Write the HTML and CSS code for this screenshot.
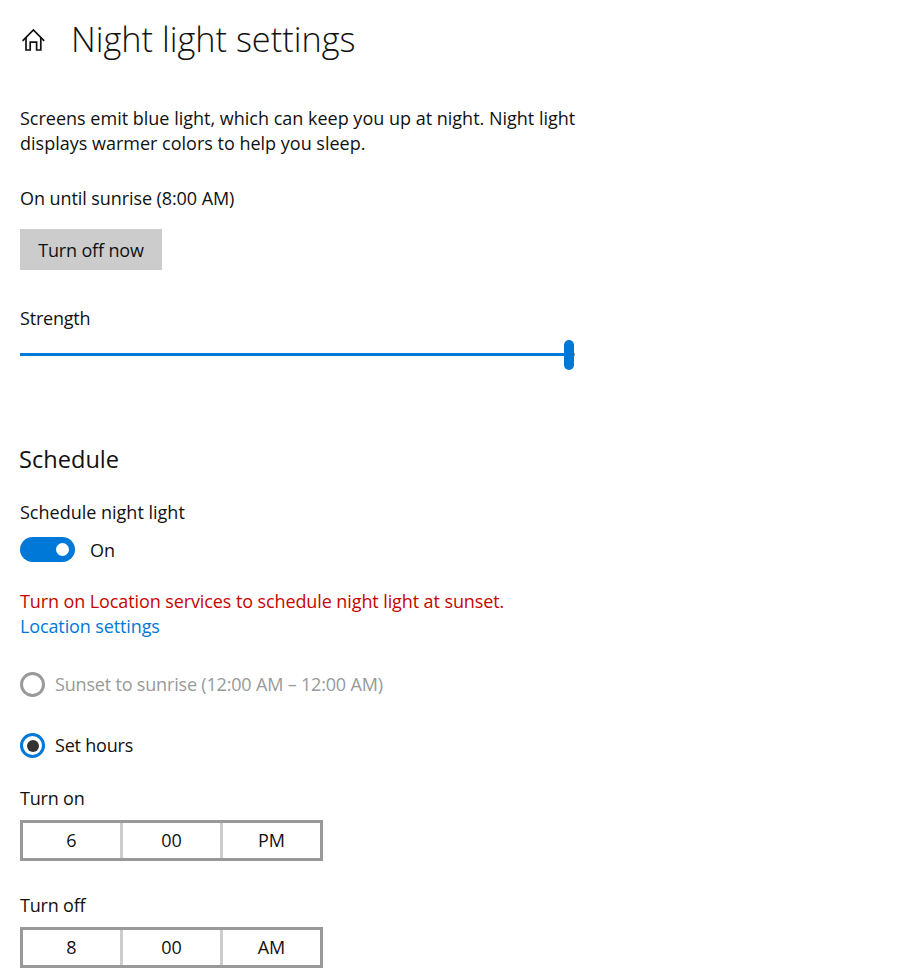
FILE: index.html
```html
<!DOCTYPE html>
<html lang="en">
<head>
  <meta charset="UTF-8">
  <title>Night light settings</title>
  <link rel="stylesheet" href="styles.css">
</head>
<body>
  <!-- Page header -->
  <div class="header">
    <svg class="home-icon" width="26" height="26" viewBox="0 0 26 26" fill="none" stroke="#111" stroke-width="1.7">
      <path d="M1.6 14.8 L12.4 4 L23.2 14.8"/>
      <path d="M5 11 V24 H9.2 V16.2 H15.6 V24 H19.8 V11"/>
    </svg>
    <h1>Night light settings</h1>
  </div>

  <p class="intro">Screens emit blue light, which can keep you up at night. Night light<br>displays warmer colors to help you sleep.</p>
  <p class="status">On until sunrise (8:00 AM)</p>
  <button class="btn">Turn off now</button>

  <p class="strength-label">Strength</p>
  <div class="slider">
    <div class="slider-thumb"></div>
  </div>

  <h2>Schedule</h2>
  <p class="toggle-label">Schedule night light</p>
  <div class="toggle-row">
    <div class="toggle"><div class="toggle-knob"></div></div>
    <span class="toggle-text">On</span>
  </div>

  <p class="warning">Turn on Location services to schedule night light at sunset.</p>
  <a class="link" href="#">Location settings</a>

  <div class="radio-row disabled">
    <div class="radio"></div>
    <span>Sunset to sunrise (12:00 AM – 12:00 AM)</span>
  </div>
  <div class="radio-row second">
    <div class="radio checked"><div class="radio-dot"></div></div>
    <span>Set hours</span>
  </div>

  <p class="time-label">Turn on</p>
  <div class="time-picker">
    <div class="time-cell">6</div>
    <div class="time-cell">00</div>
    <div class="time-cell">PM</div>
  </div>

  <p class="time-label off">Turn off</p>
  <div class="time-picker">
    <div class="time-cell">8</div>
    <div class="time-cell">00</div>
    <div class="time-cell">AM</div>
  </div>
</body>
</html>
```
FILE: styles.css
```css
body {
  margin: 0;
  padding: 0 20px;
  height: 973px;
  overflow: hidden;
  background: #fff;
  color: #111;
  font-family: "Open Sans", "Noto Sans", Arial, sans-serif;
  font-size: 18px;
  line-height: 25px;
}

p {
  margin: 0;
}

/* Header */
.header {
  display: flex;
  align-items: center;
  height: 40px;
  padding-top: 19px;
}

.home-icon {
  margin-left: 1px;
  margin-right: 24px;
  flex: none;
}

h1 {
  margin: 0;
  font-size: 34.3px;
  font-weight: 300;
  line-height: 40px;
}

.intro {
  margin-top: 47px;
}

.status {
  margin-top: 30px;
  letter-spacing: -0.08px;
}

.btn {
  display: block;
  margin-top: 18px;
  width: 142px;
  height: 41px;
  padding: 2px 0 0;
  border: 0;
  background: #ccc;
  color: #111;
  font: inherit;
  letter-spacing: -0.15px;
}

.strength-label {
  margin-top: 36px;
  letter-spacing: -0.2px;
}

/* Slider */
.slider {
  position: relative;
  width: 555px;
  height: 3px;
  margin-top: 22px;
  background: linear-gradient(to right, #0078d7 554px, #999 554px);
}

.slider-thumb {
  position: absolute;
  top: -13px;
  right: 1px;
  width: 10px;
  height: 30px;
  border-radius: 5px;
  background: #0078d7;
}

h2 {
  margin: 87px 0 0 -1px;
  font-size: 23.6px;
  font-weight: 400;
  line-height: 32px;
}

.toggle-label {
  margin-top: 25px;
}

/* Toggle */
.toggle-row {
  display: flex;
  align-items: flex-start;
  gap: 15px;
  margin-top: 12px;
}

.toggle-text {
  padding-top: 1px;
}

.toggle {
  display: flex;
  align-items: center;
  justify-content: flex-end;
  width: 55px;
  height: 25px;
  padding-right: 6px;
  box-sizing: border-box;
  border-radius: 13px;
  background: #0078d7;
}

.toggle-knob {
  width: 13px;
  height: 13px;
  border-radius: 50%;
  background: #fff;
}

.warning {
  margin-top: 26px;
  color: #c50500;
  letter-spacing: -0.1px;
}

.link {
  display: block;
  color: #0078d7;
  text-decoration: none;
  letter-spacing: -0.12px;
}

/* Radio buttons */
.radio-row {
  display: flex;
  align-items: center;
  gap: 10px;
  margin-top: 33px;
}

.radio-row.second {
  margin-top: 36px;
  letter-spacing: -0.2px;
}

.radio-row.disabled {
  color: #999;
  letter-spacing: -0.18px;
}

.radio {
  display: flex;
  align-items: center;
  justify-content: center;
  width: 25px;
  height: 25px;
  box-sizing: border-box;
  border: 3px solid #999;
  border-radius: 50%;
}

.radio.checked {
  border-color: #0078d7;
}

.radio-dot {
  width: 12px;
  height: 12px;
  border-radius: 50%;
  background: #333;
}

.time-label {
  margin-top: 28px;
  letter-spacing: -0.2px;
}

.time-label.off {
  margin-top: 32px;
}

/* Time picker */
.time-picker {
  display: flex;
  width: 303px;
  height: 41px;
  margin-top: 9px;
  box-sizing: border-box;
  border: 3px solid #999;
}

.time-cell {
  flex: 1;
  display: flex;
  align-items: center;
  justify-content: center;
}

.time-cell + .time-cell {
  border-left: 3px solid #ccc;
}
```
